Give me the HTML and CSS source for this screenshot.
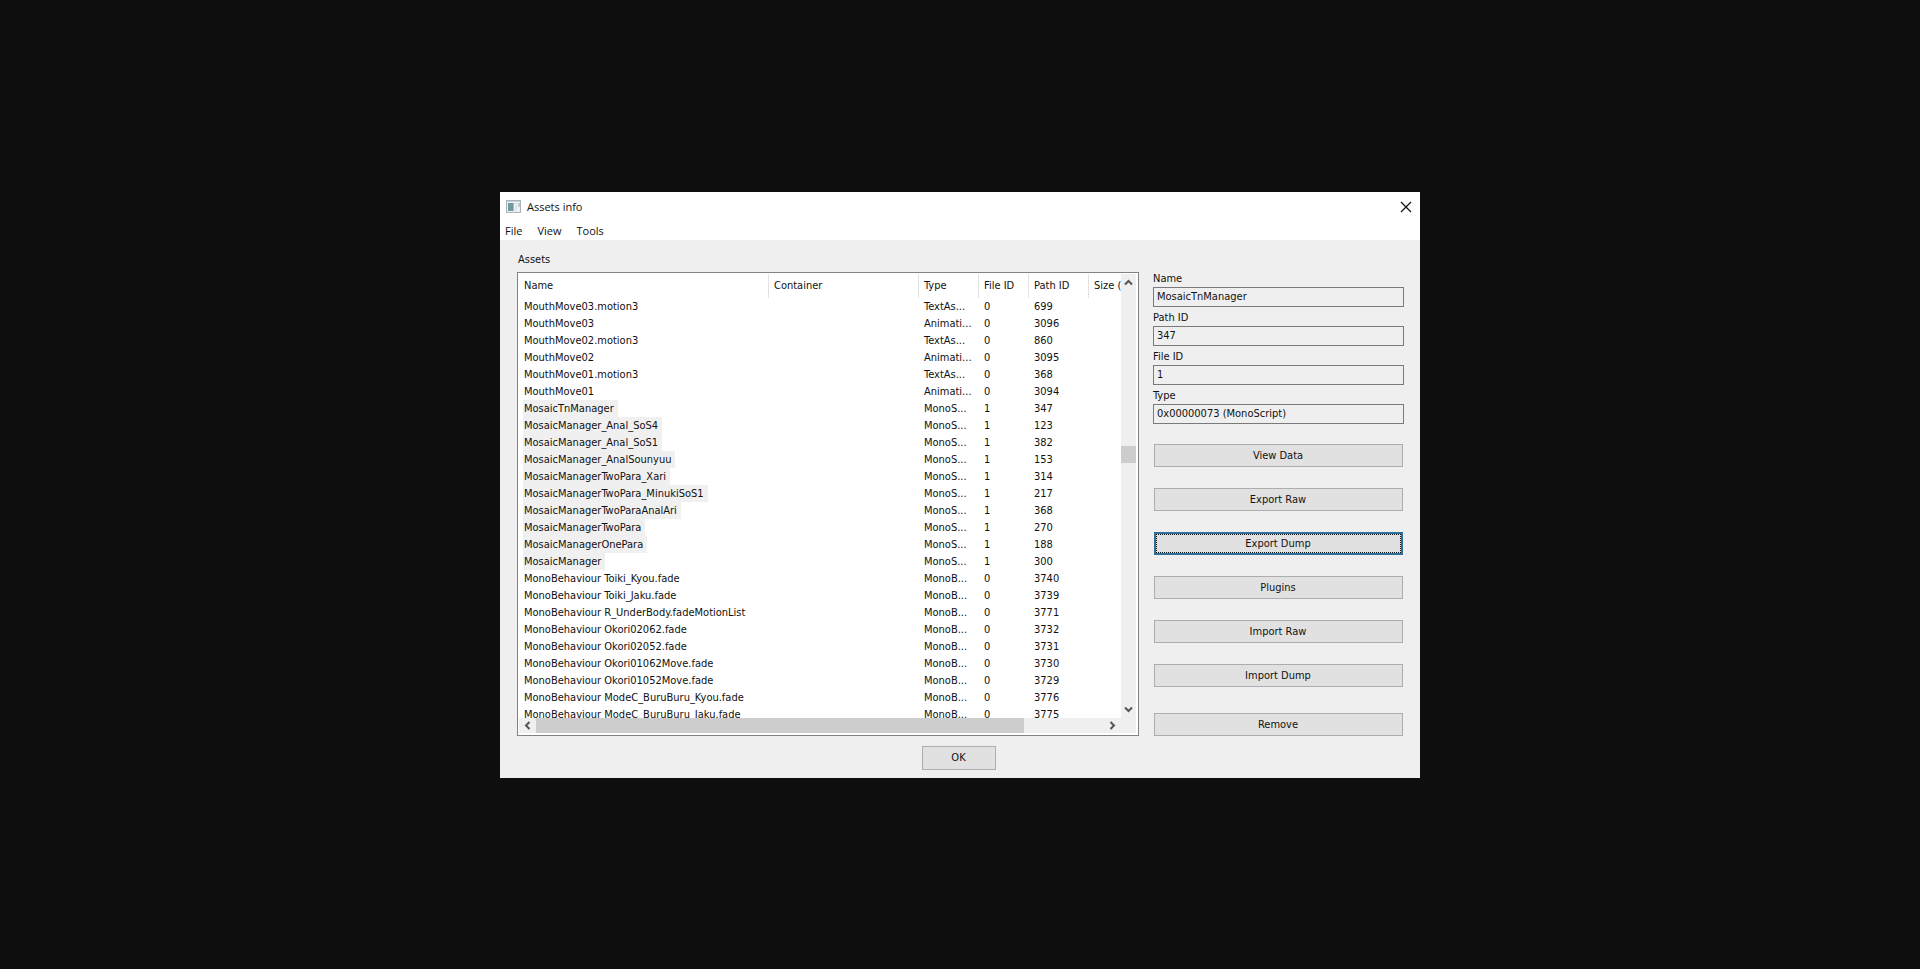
FILE: index.html
```html
<!DOCTYPE html>
<html lang="en">
<head>
<meta charset="utf-8">
<title>Assets info</title>
<link rel="stylesheet" href="styles.css">
</head>
<body>

<div class="dialog">
  <div class="titlebar">
    <svg class="app-icon" width="15" height="13" viewBox="0 0 15 13">
      <rect x="0.5" y="0.5" width="14" height="12" fill="#eef1f3" stroke="#a9b3b8"/>
      <rect x="1" y="1" width="13" height="1" fill="#c9d3d8"/>
      <rect x="2" y="3" width="6" height="8" fill="#6f9a9c"/>
      <rect x="7" y="3" width="1" height="8" fill="#a5bfc4"/>
      <rect x="9" y="3" width="2" height="8" fill="#e0e4ec"/>
      <rect x="12" y="3" width="2" height="4" fill="#c3cbd2"/>
    </svg>
    <h1>Assets info</h1>
    <button class="close" aria-label="Close">
      <svg width="12" height="12" viewBox="0 0 12 12"><path d="M1 1L11 11M11 1L1 11" stroke="#111" stroke-width="1.2"/></svg>
    </button>
  </div>

  <div class="menubar">
    <button>File</button>
    <button>View</button>
    <button>Tools</button>
  </div>

  <div class="content">
    <div class="assets">
      <h2>Assets</h2>
      <div class="list">
        <div class="viewport">
          <table>
            <colgroup>
              <col class="c-name"><col class="c-container"><col class="c-type"><col class="c-file"><col class="c-path"><col class="c-size">
            </colgroup>
            <thead>
              <tr><th>Name</th><th>Container</th><th>Type</th><th>File ID</th><th>Path ID</th><th>Size (bytes)</th></tr>
            </thead>
            <tbody id="rows"></tbody>
          </table>
        </div>
        <div class="vscroll">
          <button aria-label="Scroll up"><svg width="9" height="7" viewBox="0 0 9 7"><path d="M1 5.5L4.5 2L8 5.5"/></svg></button>
          <div class="track"><div class="thumb"></div></div>
          <button aria-label="Scroll down"><svg width="9" height="7" viewBox="0 0 9 7"><path d="M1 1.5L4.5 5L8 1.5"/></svg></button>
        </div>
        <div class="hscroll">
          <button aria-label="Scroll left"><svg width="7" height="9" viewBox="0 0 7 9"><path d="M5.5 1L2 4.5L5.5 8"/></svg></button>
          <div class="track"><div class="thumb"></div></div>
          <button aria-label="Scroll right"><svg width="7" height="9" viewBox="0 0 7 9"><path d="M1.5 1L5 4.5L1.5 8"/></svg></button>
        </div>
      </div>
    </div>

    <div class="side">
      <label for="name">Name</label>
      <input type="text" id="name" value="MosaicTnManager" readonly>
      <label for="pathId">Path ID</label>
      <input type="text" id="pathId" value="347" readonly>
      <label for="fileId">File ID</label>
      <input type="text" id="fileId" value="1" readonly>
      <label for="type">Type</label>
      <input type="text" id="type" value="0x00000073 (MonoScript)" readonly>

      <div class="actions">
        <button class="btn">View Data</button>
        <button class="btn">Export Raw</button>
        <button class="btn active">Export Dump</button>
        <button class="btn">Plugins</button>
        <button class="btn">Import Raw</button>
        <button class="btn">Import Dump</button>
        <button class="btn remove">Remove</button>
      </div>
    </div>
  </div>

  <div class="footer">
    <button class="btn ok">OK</button>
  </div>
</div>

<script src="script.js"></script>
</body>
</html>
```
FILE: script.js
```js
// name, type, file id, path id
const assets = [
  ['MouthMove03.motion3', 'TextAs...', 0, 699],
  ['MouthMove03', 'Animati...', 0, 3096],
  ['MouthMove02.motion3', 'TextAs...', 0, 860],
  ['MouthMove02', 'Animati...', 0, 3095],
  ['MouthMove01.motion3', 'TextAs...', 0, 368],
  ['MouthMove01', 'Animati...', 0, 3094],
  ['MosaicTnManager', 'MonoS...', 1, 347],
  ['MosaicManager_Anal_SoS4', 'MonoS...', 1, 123],
  ['MosaicManager_Anal_SoS1', 'MonoS...', 1, 382],
  ['MosaicManager_AnalSounyuu', 'MonoS...', 1, 153],
  ['MosaicManagerTwoPara_Xari', 'MonoS...', 1, 314],
  ['MosaicManagerTwoPara_MinukiSoS1', 'MonoS...', 1, 217],
  ['MosaicManagerTwoParaAnalAri', 'MonoS...', 1, 368],
  ['MosaicManagerTwoPara', 'MonoS...', 1, 270],
  ['MosaicManagerOnePara', 'MonoS...', 1, 188],
  ['MosaicManager', 'MonoS...', 1, 300],
  ['MonoBehaviour Toiki_Kyou.fade', 'MonoB...', 0, 3740],
  ['MonoBehaviour Toiki_Jaku.fade', 'MonoB...', 0, 3739],
  ['MonoBehaviour R_UnderBody.fadeMotionList', 'MonoB...', 0, 3771],
  ['MonoBehaviour Okori02062.fade', 'MonoB...', 0, 3732],
  ['MonoBehaviour Okori02052.fade', 'MonoB...', 0, 3731],
  ['MonoBehaviour Okori01062Move.fade', 'MonoB...', 0, 3730],
  ['MonoBehaviour Okori01052Move.fade', 'MonoB...', 0, 3729],
  ['MonoBehaviour ModeC_BuruBuru_Kyou.fade', 'MonoB...', 0, 3776],
  ['MonoBehaviour ModeC_BuruBuru_Jaku.fade', 'MonoB...', 0, 3775]
];

const rows = document.getElementById('rows');

for (const [name, type, fileId, pathId] of assets) {
  const tr = rows.insertRow();
  const label = document.createElement('span');
  label.textContent = name;
  // the MonoScript entries are the selected ones
  if (fileId == 1) label.className = 'selected';
  tr.insertCell().appendChild(label);
  tr.insertCell();
  tr.insertCell().textContent = type;
  tr.insertCell().textContent = fileId;
  tr.insertCell().textContent = pathId;
  tr.insertCell();
}
```
FILE: styles.css
```css
* {
  box-sizing: border-box;
}

body {
  margin: 0;
  min-height: 100vh;
  display: flex;
  justify-content: center;
  align-items: center;
  background: #0e0e0e;
  color: #111;
  font: 11px/16px "DejaVu Sans Condensed", "DejaVu Sans", sans-serif;
}

button,
input {
  font: inherit;
  color: inherit;
}

h1,
h2 {
  margin: 0;
  font-size: 11px;
  font-weight: normal;
}

svg path {
  fill: none;
}

.dialog {
  width: 920px;
  max-width: 100%;
  background: #efefef;
}

.titlebar,
.menubar {
  display: flex;
  align-items: center;
  background: #fff;
  font-family: "Open Sans", sans-serif;
}

.titlebar {
  height: 30px;
  padding: 0 6px;
}

.titlebar h1 {
  flex: 1;
  margin-left: 6px;
}

.close {
  display: flex;
  padding: 0 2px;
  border: 0;
  background: none;
}

.menubar {
  height: 18px;
  padding: 0 5px;
  gap: 15px;
}

.menubar button {
  padding: 0;
  border: 0;
  background: none;
}

.content {
  display: flex;
  gap: 14px;
  padding: 12px 16px 0 17px;
}

.assets {
  flex: 1;
  min-width: 0;
}

.assets h2 {
  margin: 0 0 4px 1px;
}

.list {
  display: grid;
  grid-template-columns: 1fr 15px;
  grid-template-rows: 444px 15px;
  padding: 1px 2px 2px 1px;
  border: 1px solid #828282;
  background: linear-gradient(#efefef, #efefef) content-box, #fff;
}

.viewport {
  overflow: hidden;
  background: #fff;
}

table {
  width: 640px;
  table-layout: fixed;
  border-spacing: 0;
}

.c-name { width: 250px; }
.c-container { width: 150px; }
.c-type { width: 60px; }
.c-file { width: 50px; }
.c-path { width: 60px; }
.c-size { width: 70px; }

th {
  height: 24px;
  padding: 1px 0 0 5px;
  border-right: 1px solid #e2e2e2;
  font-weight: normal;
  text-align: left;
}

td {
  height: 17px;
  padding: 1px 0 0 5px;
  white-space: nowrap;
}

td:first-child {
  padding: 0 0 0 4px;
}

td span {
  display: block;
  width: fit-content;
  padding: 1px 4px 0 1px;
}

.selected {
  background: #f0f0f0;
}

.vscroll,
.hscroll {
  display: flex;
}

.vscroll {
  flex-direction: column;
}

.hscroll {
  grid-column: 1;
}

.vscroll button,
.hscroll button {
  display: flex;
  justify-content: center;
  align-items: center;
  flex: 0 0 17px;
  padding: 0;
  border: 0;
  background: none;
}

.vscroll path,
.hscroll path {
  stroke: #555;
  stroke-width: 2;
}

.track {
  display: flex;
  flex: 1;
}

.thumb {
  background: #cdcdcd;
}

.vscroll .track {
  flex-direction: column;
}

.vscroll .thumb {
  height: 17px;
  margin-top: 155px;
}

.hscroll .thumb {
  width: 86%;
}

.side {
  display: flex;
  flex-direction: column;
  flex: 0 0 251px;
  margin-top: 20px;
}

.side input {
  height: 20px;
  margin-bottom: 3px;
  padding: 0 3px;
  border: 1px solid #7a7a7a;
  border-radius: 0;
  background: #efefef;
  outline: 0;
}

.side input:last-of-type {
  margin-bottom: 0;
}

.actions {
  display: flex;
  flex-direction: column;
  gap: 21px;
  margin: 20px 1px 0;
}

.side label {
  height: 16px;
}

.side {
  margin-top: 19px;
}

.btn {
  height: 23px;
  padding: 1px 1px 0 0;
  border: 1px solid #adadad;
  background: #e1e1e1;
}

.btn.active {
  border: 2px solid #2f6f9a;
  outline: 1px dotted #111;
  outline-offset: -3px;
}

.btn.remove {
  margin-top: 5px;
}

.footer {
  display: flex;
  justify-content: center;
  padding: 10px 2px 8px 0;
}

.btn.ok {
  width: 74px;
  height: 24px;
}
```
